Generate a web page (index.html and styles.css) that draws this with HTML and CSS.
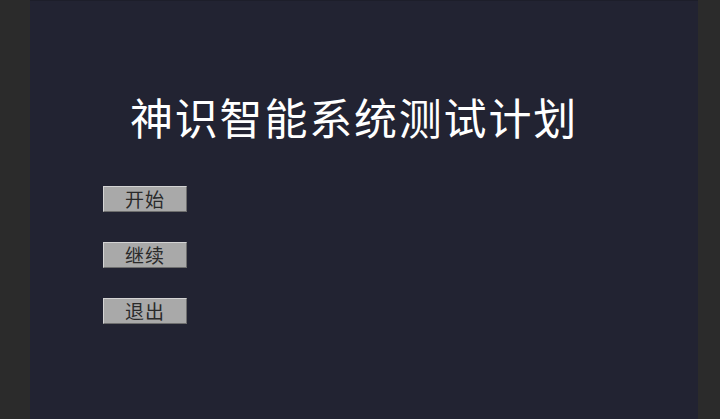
FILE: index.html
```html
<!DOCTYPE html>
<html lang="zh">
<head>
<meta charset="utf-8">
<title>神识智能系统测试计划</title>
<link rel="stylesheet" href="styles.css">
</head>
<body>
<div class="screen">
  <div class="panel">
    <h1 class="title">神识智能系统测试计划</h1>
    <div class="menu">
      <button class="btn">开始</button>
      <button class="btn">继续</button>
      <button class="btn">退出</button>
    </div>
  </div>
</div>
</body>
</html>
```
FILE: styles.css
```css
html, body {
  margin: 0;
  padding: 0;
  height: 100%;
  background: #2b2b2b;
}
.screen {
  display: flex;
  height: 419px;
  padding: 0 22px 0 30px;
}
.panel {
  flex: 1;
  background: #222332;
  display: flex;
  flex-direction: column;
  box-shadow: inset 0 1px 0 #1d1e2a;
}
.title {
  margin: 90px 0 0 100px;
  font-family: "Noto Sans CJK SC", "Liberation Serif", serif;
  font-weight: 400;
  font-size: 43px;
  line-height: 52px;
  letter-spacing: 1.8px;
  color: #ffffff;
  white-space: nowrap;
}
.menu {
  display: flex;
  flex-direction: column;
  gap: 30px;
  margin: 44px 0 0 73px;
}
.btn {
  box-sizing: border-box;
  width: 84px;
  height: 26px;
  padding: 0;
  background: #a9a9a9;
  border: 1px solid;
  border-color: #d4d4d4 #6e6e6e #6e6e6e #d4d4d4;
  color: #2a2a2a;
  font-family: "Noto Sans CJK SC", "Liberation Serif", serif;
  font-size: 19px;
  line-height: 22px;
  letter-spacing: 1px;
}
```
